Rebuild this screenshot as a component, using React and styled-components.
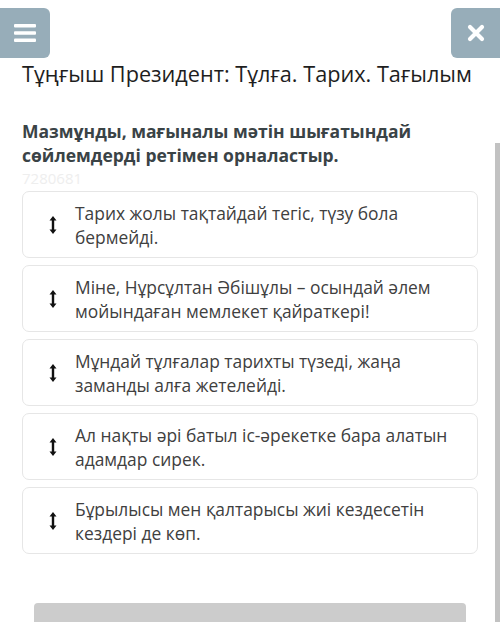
import React from 'react';
import styled, { createGlobalStyle } from 'styled-components';

const GlobalStyle = createGlobalStyle`
  html, body {
    margin: 0;
    padding: 0;
    background: #ffffff;
    overflow: hidden;
  }
  body {
    font-family: "Open Sans", "Noto Sans", sans-serif;
  }
`;

const Page = styled.div`
  position: relative;
  width: 500px;
  height: 622px;
  overflow: hidden;
  background: #ffffff;
`;

const TopBar = styled.div`
  display: flex;
  justify-content: space-between;
  padding-top: 8px;
`;

const SquareButton = styled.button`
  width: ${(p) => p.$width}px;
  height: 50px;
  border: none;
  padding: 0;
  background: #97adb9;
  border-radius: ${(p) => (p.$side === 'left' ? '0 6px 6px 0' : '6px 0 0 6px')};
  display: flex;
  align-items: center;
  justify-content: center;
`;

const Content = styled.div`
  padding: 0 22px;
`;

const Title = styled.h1`
  margin: 2px 0 0;
  font-size: 21.7px;
  line-height: 28px;
  font-weight: 400;
  color: #1e1e1e;
  white-space: nowrap;
`;

const Question = styled.h2`
  margin: 31px 0 0;
  font-size: 17.5px;
  line-height: 24px;
  font-weight: 700;
  color: #3a4346;
`;

const QuestionId = styled.div`
  font-size: 15px;
  line-height: 22px;
  color: #eeeeee;
`;

const List = styled.div`
  display: flex;
  flex-direction: column;
  gap: 7px;
  margin-top: 2px;
`;

const Card = styled.div`
  display: flex;
  align-items: center;
  min-height: 67px;
  box-sizing: border-box;
  padding: 8px 16px 8px 26px;
  border: 1px solid #e6e6e6;
  border-radius: 7px;
  background: #ffffff;
`;

const Handle = styled.div`
  width: 8px;
  flex: none;
  margin-right: 18px;
  display: flex;
  align-items: center;
  justify-content: center;
`;

const CardText = styled.div`
  font-size: 17.4px;
  line-height: 24px;
  color: #404040;
`;

const Scrollbar = styled.div`
  position: absolute;
  right: 0;
  top: 143px;
  bottom: 0;
  width: 5px;
  background: #c2c2c2;
`;

const SubmitButton = styled.button`
  position: absolute;
  left: 34px;
  right: 34px;
  top: 603px;
  height: 44px;
  border: none;
  border-radius: 4px;
  background: #cccccc;
  color: #ffffff;
  font-family: "Open Sans", sans-serif;
  font-size: 20px;
  font-weight: 700;
  padding-top: 14px;
  display: flex;
  justify-content: center;
  align-items: flex-start;
`;

function MenuIcon() {
  return (
    <svg width="22" height="20" viewBox="0 0 22 20">
      <rect x="0" y="1" width="22" height="3.5" rx="1" fill="#ffffff" />
      <rect x="0" y="8.2" width="22" height="3.5" rx="1" fill="#ffffff" />
      <rect x="0" y="15.5" width="22" height="3.5" rx="1" fill="#ffffff" />
    </svg>
  );
}

function CloseIcon() {
  return (
    <svg width="18" height="18" viewBox="0 0 18 18">
      <path d="M3 3 L15 15 M15 3 L3 15" stroke="#ffffff" strokeWidth="4.2" strokeLinecap="round" />
    </svg>
  );
}

function SortIcon() {
  return (
    <svg width="8" height="20" viewBox="0 0 8 20">
      <path d="M4 1 L7.5 5.5 H5.2 V14.5 H7.5 L4 19 L0.5 14.5 H2.8 V5.5 H0.5 Z" fill="#111111" />
    </svg>
  );
}

const items = [
  'Тарих жолы тақтайдай тегіс, түзу бола бермейді.',
  'Міне, Нұрсұлтан Әбішұлы – осындай әлем мойындаған мемлекет қайраткері!',
  'Мұндай тұлғалар тарихты түзеді, жаңа заманды алға жетелейді.',
  'Ал нақты әрі батыл іс-әрекетке бара алатын адамдар сирек.',
  'Бұрылысы мен қалтарысы жиі кездесетін кездері де көп.',
];

export default function App() {
  return (
    <Page>
      <GlobalStyle />
      <TopBar>
        <SquareButton $side="left" $width={50}>
          <MenuIcon />
        </SquareButton>
        <SquareButton $side="right" $width={49}>
          <CloseIcon />
        </SquareButton>
      </TopBar>
      <Content>
        <Title>Тұңғыш Президент: Тұлға. Тарих. Тағылым</Title>
        <Question>
          Мазмұнды, мағыналы мәтін шығатындай
          <br />
          сөйлемдерді ретімен орналастыр.
        </Question>
        <QuestionId>7280681</QuestionId>
        <List>
          {items.map((text) => (
            <Card key={text}>
              <Handle>
                <SortIcon />
              </Handle>
              <CardText>{text}</CardText>
            </Card>
          ))}
        </List>
      </Content>
      <Scrollbar />
      <SubmitButton>Жіберу</SubmitButton>
    </Page>
  );
}
